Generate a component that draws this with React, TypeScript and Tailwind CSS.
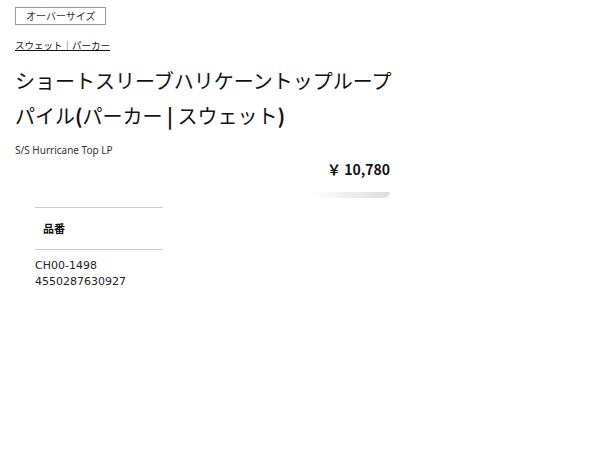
const jp = "font-['Noto_Sans_CJK_JP','Noto_Sans',sans-serif]";

const App = () => {
  return (
    <div className={`w-[600px] h-[450px] bg-white text-[#111] ${jp}`}>
      <div className="w-[375px] ml-[15px] pt-[7px]">
        <span className="block w-fit border border-[#999] px-[10px] h-[18px] leading-[16px] text-[10px] text-[#333]">
          オーバーサイズ
        </span>

        <div className="mt-[13px] text-[9.5px] leading-[14px]">
          <a href="#" className="underline text-[#111]">
            スウェット｜パーカー
          </a>
        </div>

        <h1 className="mt-[11px] text-[20px] leading-[35px] font-normal text-[#111] whitespace-nowrap">
          ショートスリーブハリケーントップループ
          <br />
          パイル<span className="font-bold">(</span>パーカー <span className="font-bold">|</span> スウェット<span className="font-bold">)</span>
        </h1>

        <p className="mt-[10px] text-[10px] leading-[14px] text-[#333] font-['Noto_Sans',sans-serif]">
          S/S Hurricane Top LP
        </p>

        <div className="flex flex-col items-end">
          <div className="mt-[3px] text-[14px] leading-[18px] font-bold text-[#111]">
            ￥ 10,780
          </div>
          <div className="mt-[14px] w-[80px] h-[6px] bg-gradient-to-r from-white to-[#ddd] rounded-br-full" />
        </div>

        <div className="ml-[20px] mt-[9px] w-[128px]">
          <div className="border-t border-b border-[#ccc] h-[43px] flex items-center pl-[8px] text-[11px] font-bold">
            品番
          </div>
          <div className="mt-[8px] text-[11px] leading-[16px] text-[#222] font-['DejaVu_Sans',sans-serif]">
            <div>CH00-1498</div>
            <div>4550287630927</div>
          </div>
        </div>
      </div>
    </div>
  );
};

export default App;
